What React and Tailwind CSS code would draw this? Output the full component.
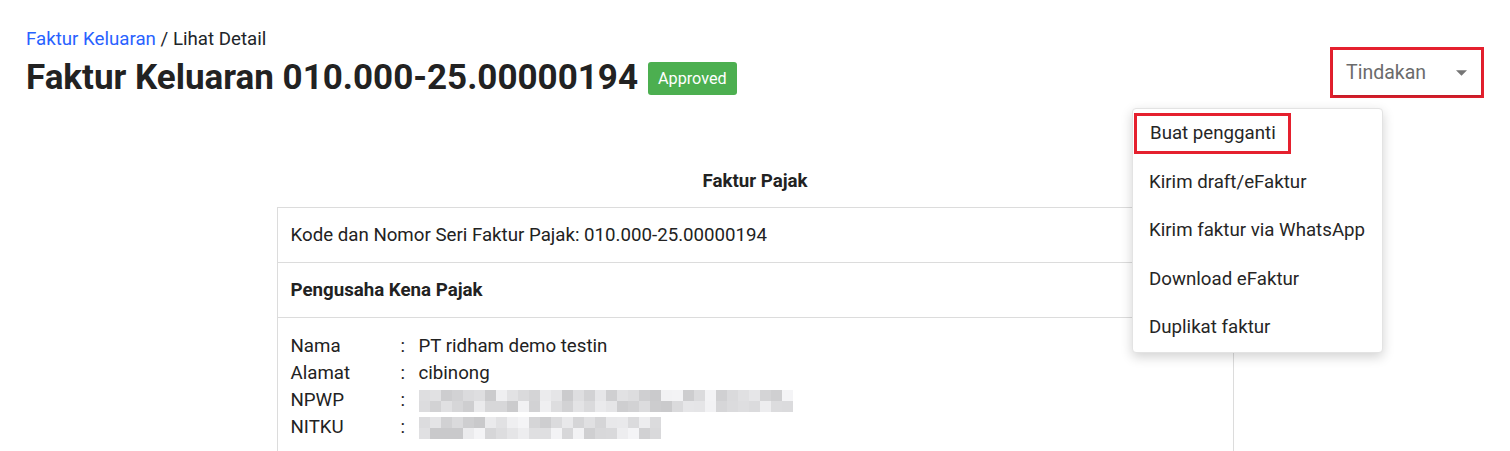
import { useMemo } from 'react';

const menuItems = [
  'Buat pengganti',
  'Kirim draft/eFaktur',
  'Kirim faktur via WhatsApp',
  'Download eFaktur',
  'Duplikat faktur',
];

// pseudo-random grey tiles to stand in for the blurred NPWP / NITKU values
function Blur({ cols, rows, seed }) {
  const tiles = useMemo(() => {
    let s = seed;
    const out = [];
    for (let i = 0; i < cols * rows; i++) {
      s = (s * 9301 + 49297) % 233280;
      const v = 200 + Math.floor((s / 233280) * 45);
      out.push(`rgb(${v},${v},${v + 2})`);
    }
    return out;
  }, [cols, rows, seed]);
  return (
    <div className="grid" style={{ gridTemplateColumns: `repeat(${cols}, 11px)`, gridAutoRows: '11px' }}>
      {tiles.map((c, i) => (
        <div key={i} style={{ background: c }} />
      ))}
    </div>
  );
}

export default function App() {
  return (
    <div className="min-h-[451px] bg-white font-['Roboto',sans-serif] text-[#212529]">
      <div className="flex items-start justify-between pl-[26px] pr-[26px] pt-[28px]">
        <div>
          <div className="text-[18.7px] leading-[22px]">
            <span className="text-[#2962ff]">Faktur Keluaran</span> / Lihat Detail
          </div>
          <div className="mt-[5px] flex items-center gap-[10px]">
            <h1 className="text-[35px] font-bold leading-[46px] text-[#222]">Faktur Keluaran 010.000-25.00000194</h1>
            <span className="rounded-[3px] bg-[#4caf50] px-[10px] py-[6px] text-[16.2px] leading-[21px] text-white">Approved</span>
          </div>
        </div>

        <div className="relative mt-[19px]">
          <div className="border-[3px] border-[#e5202e] p-0">
            <button className="flex h-[45px] w-[148px] items-center justify-between bg-white pl-[13px] pr-[14px] text-[19.5px] text-[#6b6b6b] shadow-[0_2px_2px_rgba(0,0,0,0.15)]">
              Tindakan
              <svg width="11" height="6" viewBox="0 0 10 5" className="fill-[#757575]">
                <path d="M0 0h10L5 5z" />
              </svg>
            </button>
          </div>

          <div className="absolute right-[101px] top-[61px] w-[251px] rounded-[4px] border border-[#e3e3e3] bg-white shadow-[0_4px_12px_rgba(0,0,0,0.18)]">
            {menuItems.map((item, i) => (
              <div key={item} className="flex h-[48.5px] items-center px-[1px]">
                <div
                  className={
                    i === 0
                      ? 'flex h-[41px] items-center border-[3px] border-[#e5202e] pl-[13px] pr-[12px] text-[18.7px] text-[#262626]'
                      : 'pl-[15px] text-[18.7px] text-[#262626]'
                  }
                >
                  {item}
                </div>
              </div>
            ))}
          </div>
        </div>
      </div>

      <div className="mx-auto mt-[64px] w-[957px]">
        <div className="pb-[12px] pt-[2px] text-center text-[18.7px] font-bold text-[#222]">Faktur Pajak</div>
        <div className="border border-b-0 border-[#dcdcdc] text-[18.7px] text-[#222]">
          <div className="flex h-[55px] items-center border-b border-[#dcdcdc] px-[13px]">
            Kode dan Nomor Seri Faktur Pajak: 010.000-25.00000194
          </div>
          <div className="flex h-[55px] items-center border-b border-[#dcdcdc] px-[13px] font-bold">
            Pengusaha Kena Pajak
          </div>
          <div className="px-[13px] pt-[15px] pb-[20px] leading-[27px]">
            <div className="grid grid-cols-[110px_18px_1fr] items-center">
              <div>Nama</div>
              <div>:</div>
              <div>PT ridham demo testin</div>
              <div>Alamat</div>
              <div>:</div>
              <div>cibinong</div>
              <div>NPWP</div>
              <div>:</div>
              <div className="flex h-[27px] items-center">
                <div className="h-[22px] overflow-hidden">
                  <Blur cols={34} rows={2} seed={7} />
                </div>
              </div>
              <div>NITKU</div>
              <div>:</div>
              <div className="flex h-[27px] items-center">
                <div className="h-[22px] overflow-hidden">
                  <Blur cols={22} rows={2} seed={31} />
                </div>
              </div>
            </div>
          </div>
        </div>
      </div>
    </div>
  );
}
